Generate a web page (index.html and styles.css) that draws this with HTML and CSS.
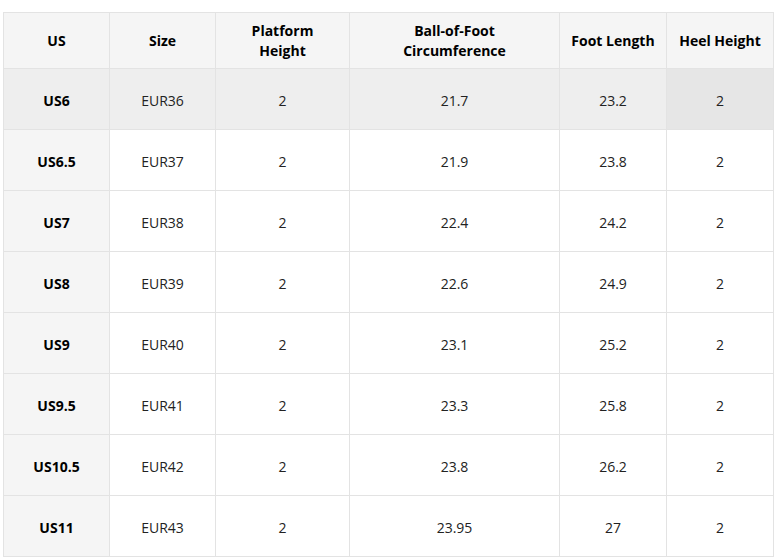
FILE: index.html
```html
<!DOCTYPE html>
<html>
<head>
<meta charset="utf-8">
<link rel="stylesheet" href="styles.css">
</head>
<body>
<table class="size-table">
  <colgroup>
    <col class="c1"><col class="c2"><col class="c3"><col class="c4"><col class="c5"><col class="c6">
  </colgroup>
  <thead>
    <tr>
      <th>US</th><th>Size</th><th>Platform<br>Height</th><th>Ball-of-Foot<br>Circumference</th><th>Foot Length</th><th>Heel Height</th>
    </tr>
  </thead>
  <tbody>
    <tr class="hover"><th>US6</th><td>EUR36</td><td>2</td><td>21.7</td><td>23.2</td><td class="cell-hover">2</td></tr>
    <tr><th>US6.5</th><td>EUR37</td><td>2</td><td>21.9</td><td>23.8</td><td>2</td></tr>
    <tr><th>US7</th><td>EUR38</td><td>2</td><td>22.4</td><td>24.2</td><td>2</td></tr>
    <tr><th>US8</th><td>EUR39</td><td>2</td><td>22.6</td><td>24.9</td><td>2</td></tr>
    <tr><th>US9</th><td>EUR40</td><td>2</td><td>23.1</td><td>25.2</td><td>2</td></tr>
    <tr><th>US9.5</th><td>EUR41</td><td>2</td><td>23.3</td><td>25.8</td><td>2</td></tr>
    <tr><th>US10.5</th><td>EUR42</td><td>2</td><td>23.8</td><td>26.2</td><td>2</td></tr>
    <tr><th>US11</th><td>EUR43</td><td>2</td><td>23.95</td><td>27</td><td>2</td></tr>
  </tbody>
</table>
</body>
</html>
```
FILE: styles.css
```css
html, body {
  margin: 0;
  background: #ffffff;
}
body {
  padding: 12px 0 0 3px;
  font-family: "Open Sans", "Noto Sans", "Liberation Sans", sans-serif;
  font-size: 14px;
  color: #1a1a1a;
}
.size-table {
  border-collapse: collapse;
  table-layout: fixed;
  width: 770px;
}
.c1 { width: 106px; }
.c2 { width: 106px; }
.c3 { width: 134px; }
.c4 { width: 210px; }
.c5 { width: 107px; }
.c6 { width: 107px; }
.size-table th,
.size-table td {
  border: 1px solid #e3e3e3;
  text-align: center;
  vertical-align: middle;
  padding: 0 2px;
  line-height: 20px;
}
.size-table thead th {
  height: 55px;
  background: #f5f5f5;
  font-weight: 700;
  color: #000;
}
.size-table tbody tr {
  height: 61px;
}
.size-table tbody th,
.size-table tbody td {
  padding-top: 3px;
}
.size-table tbody th {
  background: #f5f5f5;
  font-weight: 700;
  color: #000;
}
.size-table td {
  font-weight: 400;
  color: #222;
}
.size-table tr.hover th,
.size-table tr.hover td {
  background: #eeeeee;
}
.size-table tr.hover td.cell-hover {
  background: #e6e6e6;
}
```
